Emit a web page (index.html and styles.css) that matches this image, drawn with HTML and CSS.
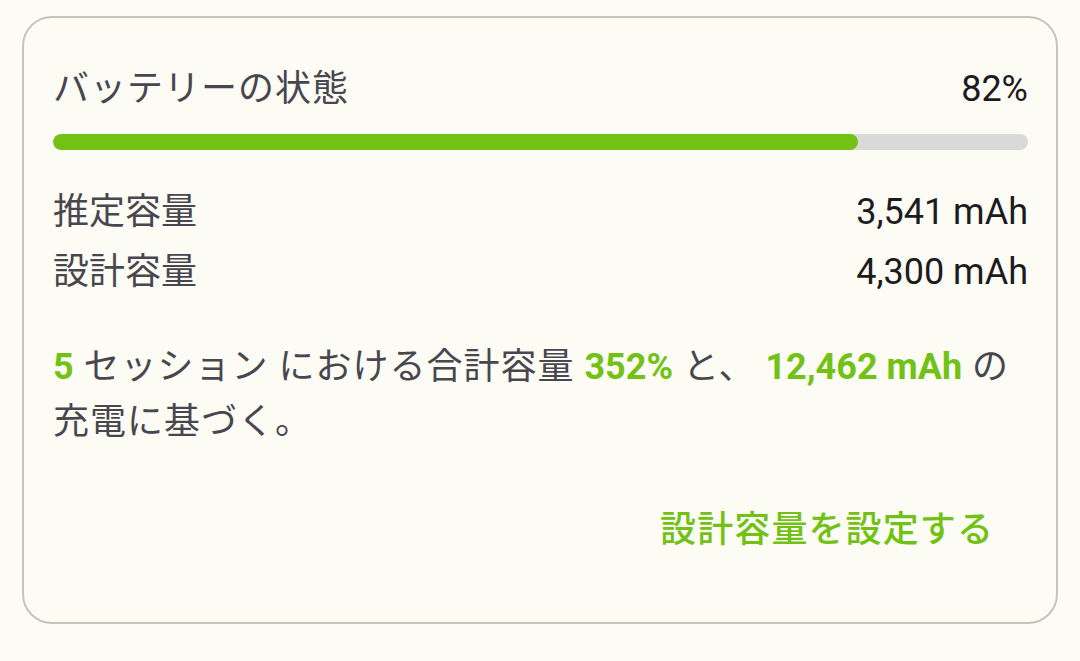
FILE: index.html
```html
<!DOCTYPE html>
<html lang="ja">
<head>
<meta charset="utf-8">
<link rel="stylesheet" href="styles.css">
</head>
<body>
  <div class="card">
    <div class="head">
      <span class="title">バッテリーの状態</span>
      <span class="pct">82%</span>
    </div>
    <div class="track"><div class="fill" style="width: 82.6%"></div></div>
    <div class="row"><span class="label">推定容量</span><span class="value">3,541 mAh</span></div>
    <div class="row"><span class="label">設計容量</span><span class="value">4,300 mAh</span></div>
    <p class="note"><b>5</b> セッション における合計容量 <b>352%</b> と、 <b>12,462 mAh</b> の充電に基づく。</p>
    <div class="actions"><span class="btn">設計容量を設定する</span></div>
  </div>
</body>
</html>
```
FILE: styles.css
```css
html, body {
  margin: 0;
  background: #fcfcf5;
}
body {
  padding: 16px 22px 0 22px;
  font-family: "Roboto", "Noto Sans CJK JP", sans-serif;
}
.card {
  width: 1036px;
  height: 608px;
  box-sizing: border-box;
  border: 2px solid #c4c6b9;
  border-radius: 30px;
  padding: 47px 28px 0 29px;
  display: flex;
  flex-direction: column;
}
.head {
  display: flex;
  justify-content: space-between;
  align-items: center;
  height: 48px;
  line-height: 48px;
  font-size: 36px;
}
.title {
  color: #48464f;
  letter-spacing: 1px;
}
.pct { color: #1d1b20; }
.track {
  margin-top: 21px;
  height: 16px;
  border-radius: 8px;
  background: #d9d9d9;
  overflow: hidden;
}
.fill {
  height: 100%;
  background: #72c215;
  border-radius: 8px;
}
.row {
  display: flex;
  justify-content: space-between;
  font-size: 36px;
  line-height: 60px;
}
.track + .row { margin-top: 32px; }
.label { color: #48464f; }
.value { color: #1d1b20; }
.note {
  margin: 38px 0 0 0;
  font-size: 36px;
  line-height: 55px;
  color: #48464f;
  letter-spacing: 1px;
}
.note b {
  color: #72c215;
  font-weight: 700;
  letter-spacing: 0;
}
.actions {
  margin-top: 56px;
  display: flex;
  justify-content: flex-end;
}
.btn {
  font-size: 36px;
  line-height: 48px;
  color: #72c215;
  font-weight: 500;
  letter-spacing: 1.1px;
  padding-right: 34px;
}
```
